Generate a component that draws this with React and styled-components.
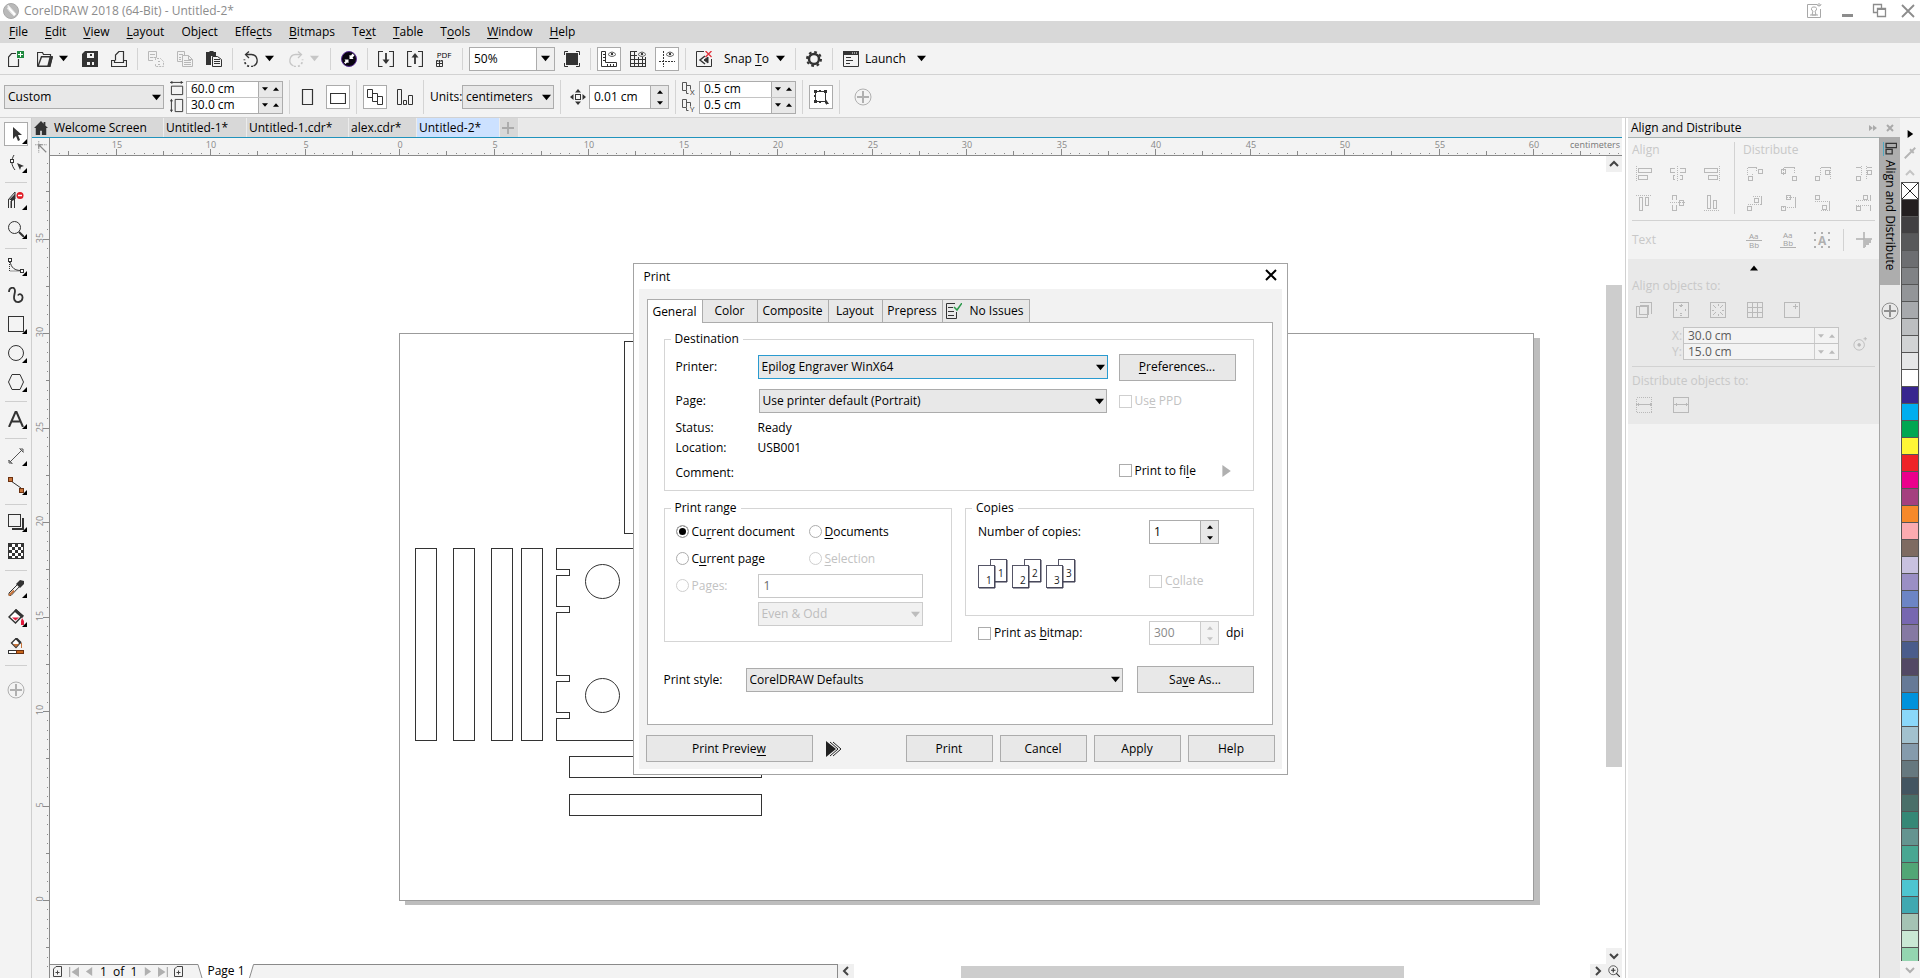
import React from 'react';
import styled, { createGlobalStyle, css } from 'styled-components';

const GlobalStyle = createGlobalStyle`
  * {
    box-sizing: border-box;
  }

  html, body, #root {
    height: 100%;
  }

  body {
    margin: 0;
    overflow: hidden;
    background: #f3f3f3;
    color: #000;
    font-family: 'Open Sans', 'Noto Sans', sans-serif;
    font-size: 12px;
    line-height: 16px;
  }

  button, input, select {
    font: inherit;
    color: inherit;
    margin: 0;
  }

  button {
    cursor: default;
    padding: 0;
    border: 0;
    background: none;
  }

  u {
    text-underline-offset: 2px;
  }

  svg {
    display: block;
    flex: none;
  }
`;

/* ---------- shared parts ---------- */

const Glyph = ({ size = 16, children, ...rest }) => (
  <svg
    width={size}
    height={size}
    viewBox="0 0 16 16"
    fill="none"
    stroke="#333"
    strokeWidth="1"
    aria-hidden="true"
    {...rest}
  >
    {children}
  </svg>
);

const Caret = ({ dir = 'down', color = '#000', size = 9 }) => {
  const shapes = {
    down: 'M0 2h10l-5 6z',
    up: 'M0 8h10l-5 -6z',
    left: 'M8 0v10l-7 -5z',
    right: 'M2 0v10l7 -5z',
  };
  return (
    <svg width={size} height={size} viewBox="0 0 10 10" aria-hidden="true">
      <path d={shapes[dir]} fill={color} />
    </svg>
  );
};

const Chevron = ({ dir = 'up', color = '#444' }) => {
  const shapes = {
    up: 'M1 7l4 -4l4 4',
    down: 'M1 3l4 4l4 -4',
    left: 'M7 1l-4 4l4 4',
    right: 'M3 1l4 4l-4 4',
  };
  return (
    <svg width="10" height="10" viewBox="0 0 10 10" aria-hidden="true">
      <path d={shapes[dir]} fill="none" stroke={color} strokeWidth="2" />
    </svg>
  );
};

const PlusCircle = ({ color = '#b0b0b0', size = 18 }) => (
  <svg width={size} height={size} viewBox="0 0 18 18" fill="none" stroke={color} aria-hidden="true">
    <circle cx="9" cy="9" r="8" />
    <path d="M3 9h12M9 3v12" strokeWidth="2" />
  </svg>
);

const SelectWrap = styled.span`
  display: grid;
  align-items: center;
  height: 24px;
  width: ${(p) => (p.$width ? `${p.$width}px` : 'auto')};
  margin: 0 ${(p) => (p.$inset ? 1 : 0)}px;

  & > * {
    grid-area: 1 / 1;
  }

  & > svg {
    justify-self: end;
    margin-right: 3px;
    pointer-events: none;
  }
`;

const SelectBox = styled.select`
  appearance: none;
  width: 100%;
  height: 24px;
  padding: 0 16px 0 3px;
  border: 1px solid ${(p) => (p.$focus ? '#2a9bd0' : '#acacac')};
  border-radius: 0;
  background: #e8e8e8;
  outline: none;

  &:disabled {
    opacity: 1;
    color: #bdbdbd;
    border-color: #cccccc;
    background: #f1f1f1;
  }
`;

const Select = ({ id, value, width, inset, focus, disabled, label }) => (
  <SelectWrap $width={width} $inset={inset}>
    <SelectBox id={id} $focus={focus} disabled={disabled} aria-label={label} defaultValue={value}>
      <option>{value}</option>
    </SelectBox>
    <Caret color={disabled ? '#bdbdbd' : '#000'} />
  </SelectWrap>
);

const TextBox = styled.input`
  min-width: 0;
  flex: 1;
  height: 24px;
  padding: 0 5px;
  border: 1px solid #acacac;
  border-radius: 0;
  background: #fff;
  outline: none;

  &:disabled {
    color: #6a6a6a;
    border-color: #c8c8c8;
  }
`;

const SpinWrap = styled.span`
  display: flex;
  width: ${(p) => p.$width}px;
  height: 24px;
  border: 1px solid ${(p) => (p.$off ? '#cccccc' : '#acacac')};
  background: #fff;
`;

const SpinInput = styled.input`
  flex: 1;
  min-width: 0;
  width: 0;
  padding: 0 4px;
  border: 0;
  background: transparent;
  outline: none;

  &:disabled {
    color: #8a8a8a;
  }
`;

const SpinButtons = styled.span`
  display: flex;
  flex-direction: ${(p) => (p.$row ? 'row' : 'column')};
  width: ${(p) => (p.$row ? 24 : 18)}px;
  border-left: 1px solid ${(p) => (p.$off ? '#cccccc' : '#acacac')};
  background: ${(p) => (p.$off ? '#f3f3f3' : '#e8e8e8')};

  button {
    flex: 1;
    display: flex;
    align-items: center;
    justify-content: center;
  }
`;

const Spinner = ({ id, value, width, disabled, label }) => (
  <SpinWrap $width={width} $off={disabled}>
    <SpinInput id={id} defaultValue={value} disabled={disabled} aria-label={label} />
    <SpinButtons $off={disabled}>
      <button aria-label="Increase" disabled={disabled}>
        <Caret dir="up" size={6} color={disabled ? '#c4c4c4' : '#000'} />
      </button>
      <button aria-label="Decrease" disabled={disabled}>
        <Caret size={6} color={disabled ? '#c4c4c4' : '#000'} />
      </button>
    </SpinButtons>
  </SpinWrap>
);

const PairBox = styled.div`
  width: ${(p) => p.$width}px;
  border: 1px solid ${(p) => (p.$off ? '#c4c4c4' : '#acacac')};
  background: ${(p) => (p.$off ? '#f3f3f3' : '#fff')};
  color: ${(p) => (p.$off ? '#5c5c5c' : '#000')};
`;

const PairRow = styled.div`
  display: flex;
  height: 15px;

  & + & {
    height: 16px;
    border-top: 1px solid ${(p) => (p.$off ? '#c4c4c4' : '#acacac')};
  }
`;

const PairField = ({ width, values, labels, off }) => (
  <PairBox $width={width} $off={off}>
    {values.map((v, i) => (
      <PairRow key={labels[i]} $off={off}>
        <SpinInput defaultValue={v} aria-label={labels[i]} />
        <SpinButtons $row $off={off}>
          <button aria-label="Decrease">
            <Caret size={6} color={off ? '#bbb' : '#000'} />
          </button>
          <button aria-label="Increase">
            <Caret dir="up" size={6} color={off ? '#bbb' : '#000'} />
          </button>
        </SpinButtons>
      </PairRow>
    ))}
  </PairBox>
);

/* ---------- window chrome ---------- */

const Window = styled.div`
  display: flex;
  flex-direction: column;
  height: 100vh;
`;

const TitleBar = styled.header`
  display: flex;
  align-items: center;
  height: 21px;
  padding: 0 4px 0 3px;
  background: #fff;
  color: #8c8c8c;
`;

const TitleText = styled.span`
  flex: 1;
  margin-left: 5px;
`;

const WindowButtons = styled.div`
  display: flex;
  align-items: center;
  gap: 17px;

  button:last-child {
    margin-left: -5px;
  }
`;

const MenuBar = styled.nav`
  display: flex;
  align-items: center;
  height: 22px;
  padding-left: 9px;
  gap: 17px;
  background: #d8d8d8;
`;

const ToolBar = styled.div`
  display: flex;
  align-items: center;
  height: 32px;
  padding-left: 1px;
  border-bottom: 1px solid #d2d2d2;
  background: #f3f3f3;
`;

const ToolCell = styled.button`
  display: flex;
  align-items: center;
  justify-content: center;
  width: 29px;
  height: 24px;
  padding-left: 1px;
`;

const Pressed = styled.span`
  display: flex;
  align-items: center;
  justify-content: center;
  width: 24px;
  height: 24px;
  border: 1px solid #ababab;
  background: #fff;
`;

const CaretButton = styled.button`
  width: 12px;
  height: 24px;
  margin-right: 4px;
`;

const Separator = styled.span`
  width: 8px;
  height: 22px;
  background: linear-gradient(#d4d4d4, #d4d4d4) center / 1px 100% no-repeat;
`;

const ZoomBox = styled.div`
  display: flex;
  width: 86px;
  height: 24px;
  margin: 0 2px 0 3px;
  border: 1px solid #acacac;
  background: #fff;

  button {
    display: grid;
    place-items: center;
    width: 18px;
    border-left: 1px solid #acacac;
    background: #f0f0f0;
  }
`;

const PdfIcon = styled.span`
  display: flex;
  flex-direction: column;
  width: 17px;
  font-size: 8px;
  line-height: 9px;
`;

const TextTool = styled.button`
  display: flex;
  align-items: center;
  height: 24px;
  gap: ${(p) => p.$gap}px;
  padding-left: ${(p) => p.$pad || 0}px;
  width: 73px;
`;

const PropertyBar = styled.div`
  display: flex;
  align-items: center;
  gap: 6px;
  height: 43px;
  padding: 2px 0 0 4px;
  border-bottom: 1px solid #d2d2d2;
  background: #f3f3f3;
`;

const PropGroup = styled.div`
  display: flex;
  align-items: center;
`;

const IconStack = styled.span`
  display: flex;
  flex-direction: column;
  gap: 2px;
  width: ${(p) => p.$width}px;
`;

const PropCell = styled.button`
  display: flex;
  align-items: center;
  justify-content: center;
  width: 24px;
  height: 24px;
  border: ${(p) => (p.$on ? '1px solid #ababab' : '0')};
  background: ${(p) => (p.$on ? '#fff' : 'none')};
`;

const PropSep = styled.span`
  width: 1px;
  height: 34px;
  background: #d4d4d4;
`;

const UnitsLabel = styled.label`
  width: 32px;
  white-space: nowrap;
`;

const NudgeIcon = styled.span`
  display: grid;
  place-items: center;
  width: 22px;
`;

const AddCell = styled.button`
  margin-left: 8px;
`;

/* ---------- work area ---------- */

const Work = styled.div`
  display: flex;
  flex: 1;
  min-height: 0;
`;

const Toolbox = styled.aside`
  display: flex;
  flex-direction: column;
  width: 32px;
  padding-top: 2px;
  border-right: 1px solid #cfcfcf;
  background: #f3f3f3;
`;

const ToolboxButton = styled.button`
  display: grid;
  place-items: center;
  width: 32px;
  height: 29px;
  padding-bottom: 1px;

  & > * {
    grid-area: 1 / 1;
  }
`;

const Flyout = styled.svg`
  place-self: end;
  margin: 0 5px 4px 0;
`;

const ToolboxRule = styled.span`
  width: 22px;
  height: 8px;
  margin-left: 5px;
  background: linear-gradient(#cfcfcf, #cfcfcf) center / 100% 1px no-repeat;
`;

const ToolboxAdd = styled.button`
  align-self: center;
  margin-top: 12px;
`;

const Documents = styled.section`
  display: flex;
  flex: 1;
  flex-direction: column;
  min-width: 0;
`;

const DocTabs = styled.div`
  display: flex;
  height: 20px;
  border-bottom: 1px solid #2093bd;
  background: #e9e9e9;
`;

const DocTab = styled.button`
  display: flex;
  align-items: center;
  gap: 6px;
  width: ${(p) => p.$width}px;
  padding-left: 2px;
  border-right: 1px solid #ececec;
  background: ${(p) => (p.$active ? '#cce1ff' : '#d8d8d8')};
  white-space: nowrap;
`;

const RulerRow = styled.div`
  display: flex;
  height: 18px;
  background: #f3f3f3;
`;

const RulerCorner = styled.div`
  display: grid;
  place-items: center;
  width: 17px;
`;

const HRuler = styled.svg`
  flex: 1;
  min-width: 0;
  border-bottom: 1px solid #8a8a8a;
  border-left: 1px solid #8a8a8a;
  font-size: 9px;
`;

const VRuler = styled.svg`
  width: 18px;
  border-right: 1px solid #8a8a8a;
  background: #f3f3f3;
  font-size: 9px;
`;

const DocBody = styled.div`
  display: flex;
  flex: 1;
  min-height: 0;
`;

const Center = styled.div`
  display: flex;
  flex: 1;
  flex-direction: column;
  min-width: 0;
  background: #fff;
`;

const CanvasRow = styled.div`
  display: flex;
  flex: 1;
  min-height: 0;
`;

const Canvas = styled.svg`
  flex: 1;
  min-width: 0;
  height: 100%;
`;

const VScroll = styled.div`
  display: flex;
  flex-direction: column;
  width: 16px;
`;

const ScrollButton = styled.button`
  display: grid;
  place-items: center;
  width: 16px;
  height: 16px;
  background: #f0f0f0;
`;

const VTrack = styled.div`
  flex: 1;
  display: grid;
  grid-template-rows: 113fr 482fr 181fr;

  &::before {
    content: '';
  }

  &::after {
    content: '';
    grid-row: 2;
    background: #cdcdcd;
  }
`;

const PageBar = styled.footer`
  display: flex;
  height: 14px;
  line-height: 14px;
`;

const BarScrollButton = styled(ScrollButton)`
  height: 14px;
`;

const PageNav = styled.div`
  display: flex;
  align-items: center;
  gap: 6px;
  width: 147px;
  padding-left: 3px;
  border-top: 1px solid #8a8a8a;
  background: #f3f3f3;
  white-space: nowrap;
`;

const PageTab = styled.button`
  display: flex;
  align-items: start;
  height: 14px;
  background: #fff;
`;

const PageTabText = styled.span`
  width: 46px;
  text-align: center;
`;

const PageFill = styled.div`
  width: 583px;
  border-top: 1px solid #8a8a8a;
  border-right: 1px solid #8a8a8a;
  background: #f3f3f3;
`;

const HTrack = styled.div`
  flex: 1;
  display: grid;
  grid-template-columns: 107fr 442fr 186fr;

  &::before {
    content: '';
  }

  &::after {
    content: '';
    grid-column: 2;
    margin-top: 2px;
    background: #cdcdcd;
  }
`;

const Splitter = styled.div`
  width: 6px;
  border-left: 3px solid #fff;
  border-right: 2px solid #fff;
  background: #d0d0d0;
`;

/* ---------- align docker ---------- */

const DockerArea = styled.div`
  display: flex;
  flex-direction: column;
  width: 272px;
  background: #e9e9e9;
`;

const DockerTitle = styled.div`
  display: flex;
  align-items: center;
  gap: 8px;
  height: 19px;
  padding: 0 6px 0 3px;

  span {
    flex: 1;
  }
`;

const DockerMain = styled.div`
  display: flex;
  flex: 1;
`;

const Docker = styled.aside`
  flex: 1;
  border-top: 1px solid #a6b2b2;
  background: #f3f3f3;
  color: #c8c8c8;
`;

const AlignSection = styled.div`
  display: grid;
  grid-template-columns: 102px 1fr;
  height: 83px;
  margin: 0 4px;
  padding-top: 4px;
  border-bottom: 1px solid #d2d2d2;
`;

const AlignColumn = styled.div`
  padding-left: ${(p) => (p.$ruled ? 8 : 0)}px;
  height: 72px;
  border-left: ${(p) => (p.$ruled ? '1px solid #d2d2d2' : '0')};
`;

const IconGrid = styled.div`
  display: grid;
  grid-template-columns: ${(p) => p.$cols};
  row-gap: 13px;
  padding-top: 8px;
  padding-left: 4px;
`;

const DockerText = styled.div`
  display: grid;
  grid-template-columns: 114px 34px 34px 34px 1fr;
  align-items: center;
  height: 38px;
  padding-left: 4px;
`;

const EdgeCell = styled.span`
  height: 22px;
  margin-left: -5px;
  padding: 3px 0 0 12px;
  border-left: 1px solid #d2d2d2;
`;

const AlignTo = styled.div`
  height: 165px;
  padding: 4px 4px 0;
  background: #e9e9e9;
`;

const Collapse = styled.div`
  display: flex;
  justify-content: center;
  padding-top: 1px;
`;

const AlignHeading = styled.div`
  margin-top: ${(p) => p.$top}px;
`;

const IconLine = styled.div`
  display: flex;
  gap: 21px;
  padding: 8px 0 0 4px;
`;

const PointRow = styled.div`
  display: flex;
  align-items: center;
  margin-top: 9px;
  padding: 0 0 6px 40px;
  border-bottom: 1px solid #d2d2d2;
`;

const AxisLabels = styled.div`
  width: 11px;
`;

const PointIcon = styled.span`
  margin-left: 14px;
`;

const DockerStrip = styled.div`
  display: flex;
  flex-direction: column;
  align-items: center;
  width: 21px;
  border-left: 1px solid #a6a6a6;
`;

const DockerTab = styled.button`
  display: flex;
  align-items: center;
  gap: 4px;
  width: 20px;
  height: 148px;
  margin-bottom: 17px;
  padding-top: 5px;
  background: #adadad;
  writing-mode: vertical-rl;
  white-space: nowrap;
`;

const Palette = styled.aside`
  display: flex;
  flex-direction: column;
  align-items: center;
  width: 20px;
  padding-top: 4px;
  background: #f3f3f3;
`;

const PaletteTop = styled.div`
  display: flex;
  flex-direction: column;
  align-items: center;
  justify-content: space-between;
  height: 60px;
  padding: 8px 0 4px;
`;

const SwatchList = styled.div`
  display: flex;
  flex-direction: column;
  flex: 1;
  min-height: 0;
  overflow: hidden;
  width: 18px;
  border: 1px solid #555;
  border-bottom: 0;
`;

const Swatch = styled.button`
  flex: none;
  height: 17px;
  border-bottom: 1px solid #555;
  background: ${(p) => p.$color};
`;

const PaletteEnd = styled.button`
  display: grid;
  place-items: center;
  width: 18px;
  height: 17px;
`;

/* ---------- print dialog ---------- */

const Overlay = styled.div`
  position: fixed;
  inset: 0;
  display: flex;
  justify-content: center;
  align-items: flex-start;
  padding-top: 263px;
`;

const Dialog = styled.section`
  width: 655px;
  padding: 0 5px 5px;
  border: 1px solid #a3a3a3;
  background: #fff;
`;

const DialogTitle = styled.div`
  display: flex;
  align-items: center;
  justify-content: space-between;
  height: 25px;
  padding: 0 5px;
`;

const CloseButton = styled.button`
  height: 17px;
  align-self: flex-start;
  padding-top: 5px;
`;

const DialogBody = styled.div`
  padding: 10px 7px 7px;
  background: #f2f2f2;
`;

const TabList = styled.div`
  display: flex;
  padding-left: 1px;
`;

const Tab = styled.button`
  display: flex;
  align-items: center;
  justify-content: ${(p) => (p.$icon ? 'flex-start' : 'center')};
  gap: 8px;
  width: ${(p) => p.$width}px;
  height: 23px;
  padding-left: ${(p) => (p.$icon ? 3 : 0)}px;
  border: 1px solid #acacac;
  border-left-width: ${(p) => (p.$active ? 1 : 0)}px;
  border-bottom: 0;
  background: #e8e8e8;
  white-space: nowrap;

  ${(p) =>
    p.$active &&
    css`
      z-index: 1;
      height: 24px;
      margin-bottom: -1px;
      background: #fff;
    `}
`;

const Panel = styled.div`
  margin: 0 2px 0 1px;
  padding: 8px 18px 31px 16px;
  border: 1px solid #acacac;
  background: #fff;
`;

const Group = styled.fieldset`
  min-width: 0;
  margin: 0;
  padding: ${(p) => p.$pad};
  border: 1px solid #d5d5d5;

  legend {
    margin-left: ${(p) => p.$indent}px;
    padding: 0 4px;
  }
`;

const DestinationGrid = styled.div`
  display: grid;
  grid-template-columns: 82px 350px 117px;
  grid-template-rows: 28px 40px 14px 26px 23px;
  align-items: center;

  & > :nth-child(3n) {
    margin-left: 11px;
    width: 117px;
  }
`;

const PushButton = styled.button`
  width: ${(p) => (p.$width ? `${p.$width}px` : 'auto')};
  height: 27px;
  border: 1px solid #acacac;
  background: #e8e8e8;
`;

const Choice = styled.label`
  display: flex;
  align-items: center;
  gap: 3px;
  white-space: nowrap;
  color: ${(p) => (p.$off ? '#c2c2c2' : '#000')};
`;

const Check = styled.input`
  appearance: none;
  flex: none;
  width: 13px;
  height: 13px;
  border: 1px solid ${(p) => (p.disabled ? '#cfcfcf' : '#acacac')};
  background: #fff;
`;

const Radio = styled.input`
  appearance: none;
  flex: none;
  width: 13px;
  height: 13px;
  border: 1px solid ${(p) => (p.disabled ? '#cfcfcf' : '#acacac')};
  border-radius: 50%;
  background: #fff;

  &:checked {
    background: #000;
    box-shadow: inset 0 0 0 2px #fff;
  }
`;

const FileChoice = styled.div`
  display: flex;
  align-items: center;
  justify-content: space-between;
  padding: 0 4px 4px 0;
`;

const Halves = styled.div`
  display: grid;
  grid-template-columns: 1fr 1fr;
  align-items: start;
  gap: 13px;
  margin-top: 9px;
`;

const RangeRow = styled.div`
  display: grid;
  grid-template-columns: ${(p) => p.$cols};
  align-items: center;
  height: ${(p) => p.$height || 27}px;
`;

const CollateCell = styled.div`
  padding-top: 14px;
`;

const BitmapRow = styled.div`
  display: grid;
  grid-template-columns: 171px 70px 1fr;
  align-items: center;
  height: 24px;
  margin-top: 5px;
  padding-left: 13px;

  & > :last-child {
    padding-left: 7px;
  }
`;

const StyleRow = styled.div`
  display: grid;
  grid-template-columns: 82px 1fr 117px;
  align-items: center;
  margin-top: 21px;

  span {
    margin-right: 14px;
  }
`;

const DialogFooter = styled.div`
  display: flex;
  align-items: center;
  margin-top: 10px;
`;

const FooterActions = styled.div`
  display: flex;
  gap: 7px;
  margin-left: auto;
`;

const PreviewArrow = styled.button`
  margin-left: 13px;
`;

/* ---------- data ---------- */

const menus = [
  ['', 'F', 'ile'],
  ['', 'E', 'dit'],
  ['', 'V', 'iew'],
  ['', 'L', 'ayout'],
  ['Ob', 'j', 'ect'],
  ['Effe', 'c', 'ts'],
  ['', 'B', 'itmaps'],
  ['Te', 'x', 't'],
  ['', 'T', 'able'],
  ['T', 'o', 'ols'],
  ['', 'W', 'indow'],
  ['', 'H', 'elp'],
];

const swatches = [
  '#231f20', '#414042', '#58595b', '#6d6e71', '#808285', '#939598', '#a7a9ac', '#bcbec0',
  '#d1d3d4', '#e6e7e8', '#ffffff', '#38268f', '#00aeef', '#00a651', '#fff735', '#ee2328',
  '#ec008c', '#a5407f', '#f7892a', '#fbabb0', '#7e6b62', '#c8c1df', '#9a8fc5', '#6d85c5',
  '#7767b0', '#8579a3', '#4a5c8b', '#524864', '#667a97', '#0092dc', '#8ad7f9', '#a2c1ce',
  '#859bac', '#66787f', '#435561', '#4a6f69', '#358876', '#649490', '#48a792', '#51a676',
  '#4ec5d0', '#40a8b1', '#a5c3b4', '#c9e8d4', '#94d5b0',
];

const CM = 18.9;

/* ---------- pieces ---------- */

const TopRuler = () => {
  const ticks = [];
  for (let i = -36; i <= 129; i += 1) {
    const x = Math.round(349 + (i * CM) / 2) + 0.5;
    let y = 15;
    if (i % 10 === 0) y = 11;
    else if (i % 5 === 0) y = 13;
    ticks.push(<path key={i} d={`M${x} ${y}V${y === 15 ? 16 : 17}`} stroke="#8a8a8a" />);
  }
  const labels = [];
  for (let n = -15; n <= 60; n += 5) {
    labels.push(
      <text key={n} x={Math.round(350 + n * CM)} y="10" textAnchor="middle" fill="#888">
        {Math.abs(n)}
      </text>
    );
  }
  return (
    <HRuler height="18">
      {ticks}
      {labels}
      <text x="100%" dx="-2" y="10" textAnchor="end" fill="#777">
        centimeters
      </text>
    </HRuler>
  );
};

const SideRuler = () => {
  const ticks = [];
  for (let i = -7; i <= 78; i += 1) {
    const y = Math.round(744 - (i * CM) / 2) + 0.5;
    let x = 15;
    if (i % 10 === 0) x = 11;
    else if (i % 5 === 0) x = 14;
    ticks.push(<path key={i} d={`M${x} ${y}H${x === 15 ? 16 : 17}`} stroke="#8a8a8a" />);
  }
  return (
    <VRuler>
      {ticks}
      {[0, 5, 10, 15, 20, 25, 30, 35].map((n) => {
        const y = Math.round(743 - n * CM);
        return (
          <text key={n} x="11" y={y} transform={`rotate(-90 11 ${y})`} textAnchor="middle" fill="#888">
            {n}
          </text>
        );
      })}
    </VRuler>
  );
};

const Drawing = () => (
  <Canvas fill="none" stroke="#333" shapeRendering="crispEdges">
    <path d="M1484 182h6v567h-1135v-5h1129z" fill="#bdbdbd" stroke="none" />
    <rect x="349.5" y="177.5" width="1134" height="567" fill="#fff" stroke="#9b9b9b" />
    <rect x="574.5" y="185.5" width="193" height="192" />
    <rect x="365.5" y="392.5" width="21" height="192" />
    <rect x="403.5" y="392.5" width="21" height="192" />
    <rect x="441.5" y="392.5" width="21" height="192" />
    <rect x="471.5" y="392.5" width="21" height="192" />
    <path d="M700.5 392.5H506.5v21h13v6h-13v31h13v6h-13v63h13v6h-13v31h13v6h-13v22h194" />
    <circle cx="552.5" cy="425.5" r="17" shapeRendering="auto" />
    <circle cx="552.5" cy="539.5" r="17" shapeRendering="auto" />
    <rect x="519.5" y="600.5" width="192" height="21" />
    <rect x="519.5" y="638.5" width="192" height="21" />
  </Canvas>
);

const Tool = ({ label, flyout = true, on, children }) => (
  <ToolboxButton aria-label={label}>
    {on ? <Pressed>{children}</Pressed> : children}
    {flyout && (
      <Flyout width="5" height="5" viewBox="0 0 5 5">
        <path d="M5 0v5H0z" fill="#000" />
      </Flyout>
    )}
  </ToolboxButton>
);

const StandardBar = () => (
  <ToolBar>
    <ToolCell aria-label="New">
      <Glyph>
        <path d="M8 2.500H3.500L0.500 6v9.500h10V8" strokeWidth="1.200" />
        <rect x="9" y="0" width="7" height="7" fill="#1f8a3f" stroke="none" />
        <path d="M12.500 1v5M10 3.500h5" stroke="#fff" />
      </Glyph>
    </ToolCell>
    <ToolCell aria-label="Open">
      <Glyph>
        <path d="M0.500 15V1.500h5l1 2h7v2" strokeWidth="1.200" />
        <path d="M0 16L4 5h12l-2.500 11z" fill="#333" stroke="none" />
        <path d="M5 6.500h9.500l-2 8H2z" fill="#f3f3f3" stroke="none" />
        <path d="M12.500 6h3.500l-3 10h-3z" fill="#333" stroke="none" />
      </Glyph>
    </ToolCell>
    <CaretButton aria-label="Open recent">
      <Caret />
    </CaretButton>
    <ToolCell aria-label="Save">
      <Glyph>
        <path d="M0 3l3 -3h13v16H0z" fill="#333" stroke="none" />
        <path d="M5 2h7v5H5zM5 11h7v3H5z" fill="#f3f3f3" stroke="none" />
        <path d="M8 3h2v2H8zM8 11h2v3H8z" fill="#333" stroke="none" />
      </Glyph>
    </ToolCell>
    <ToolCell aria-label="Print">
      <Glyph strokeWidth="1.200">
        <path d="M4.500 9.500V4l3.500 -3.500h4.500v9M0.500 9.500h3v2h9v-2h3v6h-15z" />
      </Glyph>
    </ToolCell>
    <Separator />
    <ToolCell aria-label="Cut">
      <Glyph stroke="#b8b8b8">
        <path d="M5 9.500H0.500v-9h8v6M2 3.500h5M2 6.500h3M5.500 6.500h3" />
        <path d="M7.500 9v-1.500h5l3 3v5h-8V13M10 10.500h3M10 13.500h3" strokeDasharray="2 1" />
      </Glyph>
    </ToolCell>
    <ToolCell aria-label="Copy">
      <Glyph stroke="#b8b8b8">
        <path d="M5 10.500H0.500v-10h7v4M2 3.500h4M2 6.500h2M2 8.500h2" />
        <path d="M5.500 4.500h6l4 4v7h-10zM7 9.500h7M7 11.500h7M7 13.500h7M11.500 4.500v4h4" />
      </Glyph>
    </ToolCell>
    <ToolCell aria-label="Paste">
      <Glyph>
        <path d="M0 1h3l1 -1h3l1 1h2v4H5v9H0z" fill="#333" stroke="none" />
        <path d="M6.500 5.500h5l4 3v7h-9zM8 8.500h6M8 10.500h6M8 12.500h6" />
      </Glyph>
    </ToolCell>
    <Separator />
    <ToolCell aria-label="Undo">
      <Glyph strokeWidth="1.300">
        <path d="M3 3.500h5.500a6 6 0 0 1 2 11.500" />
        <path d="M6 0.500L2.500 3.500L6 7" />
        <path d="M10 15.300a6.500 6.500 0 0 1 -8.500 -7" strokeDasharray="2 2" strokeWidth="1.800" />
      </Glyph>
    </ToolCell>
    <CaretButton aria-label="Undo history">
      <Caret />
    </CaretButton>
    <ToolCell aria-label="Redo">
      <Glyph stroke="#c6c6c6" strokeWidth="1.300">
        <path d="M13 3.500H7.500a6 6 0 0 0 -2 11.500" />
        <path d="M10 0.500l3.500 3l-3.500 3.500" />
        <path d="M6 15.300a6.500 6.500 0 0 0 8.500 -7" strokeDasharray="2 2" strokeWidth="1.800" />
      </Glyph>
    </ToolCell>
    <CaretButton aria-label="Redo history">
      <Caret color="#c6c6c6" />
    </CaretButton>
    <Separator />
    <ToolCell aria-label="Search content">
      <Glyph>
        <circle cx="8" cy="8" r="7.500" fill="#08040f" stroke="#5b2f96" />
        <path d="M8.500 4v4h4l-1 -1.500l2 -2l-2 -2l-1.500 2zM7.500 12V8.500h-4l1 1.500l-1.500 1.500l1.500 1.500l1.500 -1.500z" fill="#fff" stroke="none" />
      </Glyph>
    </ToolCell>
    <Separator />
    <ToolCell aria-label="Import">
      <Glyph>
        <path d="M5 0.500H0.500v15h4M11 0.500h4.500v15h-4" strokeWidth="1.200" />
        <path d="M8 2v10" strokeWidth="1.800" />
        <path d="M4.500 8.500h7L8 13z" fill="#333" stroke="none" />
      </Glyph>
    </ToolCell>
    <ToolCell aria-label="Export">
      <Glyph>
        <path d="M5 0.500H0.500v15h4M11 0.500h4.500v15h-4" strokeWidth="1.200" />
        <path d="M8 4v9" strokeWidth="1.800" />
        <path d="M4.500 6.500h7L8 2z" fill="#333" stroke="none" />
      </Glyph>
    </ToolCell>
    <ToolCell aria-label="Publish to PDF">
      <PdfIcon>
        PDF
        <svg width="8" height="8" viewBox="0 0 8 8" fill="none" stroke="#333">
          <path d="M2 1.500H0.500v6h6v-6H5M3.500 7V1M1.500 3l2 -2l2 2M1 4.500h5" />
        </svg>
      </PdfIcon>
    </ToolCell>
    <Separator />
    <ZoomBox>
      <SpinInput defaultValue="50%" aria-label="Zoom level" />
      <button aria-label="Zoom levels">
        <Caret />
      </button>
    </ZoomBox>
    <ToolCell aria-label="Full-screen preview">
      <Glyph>
        <rect x="2.500" y="2.500" width="11" height="11" fill="#333" />
        <path d="M4 0.500H0.500V4M12 0.500h3.500V4M4 15.500H0.500V12M12 15.500h3.500V12" />
      </Glyph>
    </ToolCell>
    <Separator />
    <ToolCell aria-label="Show rulers">
      <Pressed>
        <Glyph>
          <path d="M0.500 0.500h4v11h11v4h-15zM2 3.500h2M2 6.500h2M2 9.500h2M6.500 13v2M9.500 13v2M12.500 13v2" />
          <path d="M7 3.500q4 -5 8 0q-4 4 -8 0z" stroke="#666" />
          <circle cx="11" cy="3" r="1.200" fill="#333" stroke="none" />
        </Glyph>
      </Pressed>
    </ToolCell>
    <ToolCell aria-label="Show grid">
      <Glyph>
        <path d="M0.500 0v16M4.500 0v16M8.500 6v10M12.500 6v10M15.500 6v10M0 0.500h7M0 4.500h7M0 8.500h16M0 12.500h16M0 15.500h16" />
        <path d="M8 3.500q4 -5 8 0q-4 4 -8 0z" stroke="#666" />
        <circle cx="12" cy="3" r="1.200" fill="#333" stroke="none" />
      </Glyph>
    </ToolCell>
    <ToolCell aria-label="Show guidelines">
      <Pressed>
        <Glyph>
          <path d="M4.500 0v16M0 10.500h16" strokeDasharray="2 1" />
          <path d="M7 3.500q4 -5 8 0q-4 4 -8 0z" stroke="#666" />
          <circle cx="11" cy="3" r="1.200" fill="#333" stroke="none" />
        </Glyph>
      </Pressed>
    </ToolCell>
    <Separator />
    <ToolCell aria-label="Snap off">
      <Glyph>
        <path d="M8 0.500H0.500v15h15V8" />
        <path d="M9 5L4 9l5 4" strokeWidth="1.500" />
        <path d="M8 9l4 -3v6z" fill="#333" />
        <path d="M9.500 0l6 6M15.500 0l-6 6" stroke="#e0303a" strokeWidth="1.300" />
      </Glyph>
    </ToolCell>
    <TextTool $pad={6} $gap={7}>
      <span>
        Snap <u>T</u>o
      </span>
      <Caret />
    </TextTool>
    <Separator />
    <ToolCell aria-label="Options">
      <Glyph>
        <circle cx="8" cy="8" r="5" strokeWidth="2.500" />
        <circle cx="8" cy="8" r="7" strokeWidth="2" strokeDasharray="2.750 2.750" />
      </Glyph>
    </ToolCell>
    <Separator />
    <ToolCell aria-label="Application launcher">
      <Glyph>
        <path d="M0.500 0.500h15v15h-15zM3 6.500h5M3 9.500h7M3 12.500h4" />
        <path d="M0 0h16v4H0z" fill="#333" stroke="none" />
        <path d="M9 2h1M11 2h1M13 2h1" stroke="#fff" />
      </Glyph>
    </ToolCell>
    <TextTool $gap={11}>
      Launch
      <Caret />
    </TextTool>
  </ToolBar>
);

const DuplicateIcon = ({ axis }) => (
  <svg width="14" height="15" viewBox="0 0 14 15" fill="none" stroke="#555" aria-hidden="true">
    <path d="M0.500 1.500h4v8h-4zM5 4.500h3.500v4M4.500 10v2.500h2" />
    <text x="8" y="14" fontSize="8" fill="#333" stroke="none">{axis}</text>
  </svg>
);

const PropertiesBar = () => (
  <PropertyBar>
    <Select value="Custom" width={160} label="Page size" />
    <PropGroup>
      <IconStack $width={16}>
        <Glyph size={15}>
          <path d="M0 1.500h14M2 0v3M12 0v3M1.500 5.500h12v9h-12z" />
        </Glyph>
        <Glyph size={15}>
          <path d="M1.500 1v14M0 3h3M0 13h3M5.500 1.500h8v13h-8z" />
        </Glyph>
      </IconStack>
      <PairField width={97} values={['60.0 cm', '30.0 cm']} labels={['Page width', 'Page height']} />
    </PropGroup>
    <PropSep />
    <PropCell aria-label="Portrait">
      <Glyph>
        <path d="M2.500 0.500h10v15h-10z" strokeWidth="1.200" />
      </Glyph>
    </PropCell>
    <PropCell $on aria-label="Landscape">
      <Glyph>
        <path d="M0.500 4.500h15v10h-15z" strokeWidth="1.200" />
      </Glyph>
    </PropCell>
    <PropSep />
    <PropCell $on aria-label="All pages">
      <Glyph>
        <path d="M0.500 0.500h5v8h-5zM5.500 4.500h5v8h-5zM10.500 7.500h5v8h-5z" fill="#fff" />
      </Glyph>
    </PropCell>
    <PropCell aria-label="Current page">
      <Glyph>
        <path d="M0.500 0.500h4v15h-4zM6.500 11.500h3v4h-3zM11.500 6.500h4v9h-4z" />
      </Glyph>
    </PropCell>
    <PropSep />
    <PropGroup>
      <UnitsLabel htmlFor="units">Units:</UnitsLabel>
      <Select id="units" value="centimeters" width={92} />
    </PropGroup>
    <PropSep />
    <PropGroup>
      <NudgeIcon>
        <Glyph>
          <rect x="5.500" y="5.500" width="5" height="5" />
          <path d="M8 0l3 3.500H5zM8 16l3 -3.500H5zM0 8l3.500 -3v6zM16 8l-3.500 -3v6z" fill="#333" stroke="none" />
        </Glyph>
      </NudgeIcon>
      <Spinner value="0.01 cm" width={80} label="Nudge distance" />
    </PropGroup>
    <PropSep />
    <PropGroup>
      <IconStack $width={17}>
        <DuplicateIcon axis="X" />
        <DuplicateIcon axis="Y" />
      </IconStack>
      <PairField width={97} values={['0.5 cm', '0.5 cm']} labels={['Duplicate X', 'Duplicate Y']} />
    </PropGroup>
    <PropSep />
    <PropCell $on aria-label="Treat as filled">
      <Glyph>
        <path d="M2.500 2.500h10v10h-10z" />
        <path d="M1 1h3v3H1zM6 1h2v2H6zM11 1h3v3h-3zM1 11h3v3H1zM1 6h2v2H1zM6 12h2v2H6zM12 9l4 6h-2v1l-2 -2z" fill="#333" stroke="none" />
      </Glyph>
    </PropCell>
    <PropSep />
    <AddCell aria-label="Customize">
      <PlusCircle />
    </AddCell>
  </PropertyBar>
);

const ToolboxPanel = () => (
  <Toolbox>
    <Tool label="Pick" on>
      <Glyph>
        <path d="M5 1v12l3 -3l2 5l2 -1l-2 -5h4z" fill="#333" stroke="none" />
      </Glyph>
    </Tool>
    <Tool label="Shape">
      <Glyph>
        <path d="M6 0C3 5 3 10 7 15" />
        <rect x="2.500" y="4.500" width="3" height="3" fill="#fff" />
        <path d="M9 8l7 3l-3 1l-1 3z" fill="#333" stroke="none" />
      </Glyph>
    </Tool>
    <ToolboxRule />
    <Tool label="Crop">
      <Glyph>
        <path d="M0 8l7 -8v7l-4 2v7M0.500 8v8M3.500 8v8M6.500 8v8" />
        <path d="M1 8l6 -6v6z" fill="#333" stroke="none" />
        <circle cx="12" cy="3.500" r="3.500" fill="#e01b24" stroke="none" />
        <path d="M10 3.500h4" stroke="#fff" strokeWidth="1.500" />
      </Glyph>
    </Tool>
    <Tool label="Zoom">
      <Glyph>
        <circle cx="6.500" cy="6.500" r="6" />
        <path d="M11 11l5 5" strokeWidth="2" />
      </Glyph>
    </Tool>
    <ToolboxRule />
    <Tool label="Freehand">
      <Glyph>
        <path d="M2 3C3 10 7 12.500 13 12.500" />
        <path d="M1.500 4v9h10" strokeDasharray="1 1" />
        <rect x="0.500" y="0.500" width="3" height="3" fill="#fff" />
        <rect x="12.500" y="11.500" width="3" height="3" fill="#fff" />
      </Glyph>
    </Tool>
    <Tool label="Artistic media" flyout={false}>
      <Glyph>
        <path d="M1 5C1 0 7 -1 7 4C7 7 5 10 6.500 13C8 16 14 16 14.500 11C15 7 11 6 10 8.500" strokeWidth="1.800" />
      </Glyph>
    </Tool>
    <Tool label="Rectangle">
      <Glyph>
        <rect x="0.500" y="0.500" width="15" height="15" />
      </Glyph>
    </Tool>
    <Tool label="Ellipse">
      <Glyph>
        <circle cx="8" cy="8" r="7.500" />
      </Glyph>
    </Tool>
    <Tool label="Polygon">
      <Glyph>
        <path d="M4 0.500h8l3.500 7.500l-3.500 7.500H4L0.500 8z" />
      </Glyph>
    </Tool>
    <ToolboxRule />
    <Tool label="Text">
      <Glyph strokeWidth="2">
        <path d="M1 16L7.500 1h1L15 16M4 10.500h8" />
      </Glyph>
    </Tool>
    <ToolboxRule />
    <Tool label="Dimension">
      <Glyph>
        <path d="M2 14L14 2M0.500 12l4 4M11.500 0.500l4 4M1 15v-3M15 1v3M1 15h3M15 1h-3" stroke="#555" />
      </Glyph>
    </Tool>
    <Tool label="Connector">
      <Glyph>
        <path d="M3 4l10 7" />
        <rect x="0.500" y="0.500" width="4" height="4" fill="#c8743a" stroke="#6b3110" />
        <rect x="11.500" y="11.500" width="4" height="4" fill="#c8743a" stroke="#6b3110" />
      </Glyph>
    </Tool>
    <ToolboxRule />
    <Tool label="Drop shadow">
      <Glyph>
        <rect x="0.500" y="0.500" width="12" height="12" />
        <path d="M15 4v11H4" strokeWidth="2" />
      </Glyph>
    </Tool>
    <Tool label="Transparency" flyout={false}>
      <Glyph shapeRendering="crispEdges">
        <rect x="0.500" y="0.500" width="15" height="15" fill="#fff" />
        {[0, 1, 2, 3, 4].map((r) =>
          [0, 1, 2, 3, 4].map((c) =>
            (r + c) % 2 === 0 ? (
              <rect key={`${r}${c}`} x={1 + c * 3} y={1 + r * 3} width="3" height="3" fill="#333" stroke="none" />
            ) : null
          )
        )}
      </Glyph>
    </Tool>
    <ToolboxRule />
    <Tool label="Eyedropper">
      <Glyph>
        <path d="M10 4L1 13v2.500h2L12 6" />
        <path d="M1 15.500l5 -5" stroke="#c8743a" strokeWidth="2" />
        <path d="M8 4l4 -4l4 1v3l-4 4z" fill="#333" stroke="none" />
      </Glyph>
    </Tool>
    <Tool label="Interactive fill">
      <Glyph>
        <path d="M1 8L8 1l6 6l-6.500 7z" fill="#fff" strokeWidth="1.500" />
        <path d="M7 1l8 7" strokeWidth="3" />
        <path d="M4 8.500h7l-3.500 3z" fill="#e01b3c" stroke="none" />
        <path d="M14 9l2 3v4h-3v-4z" fill="#e01b3c" stroke="none" />
      </Glyph>
    </Tool>
    <Tool label="Smart fill" flyout={false}>
      <Glyph>
        <path d="M3.500 5L8 0.500L12 5L8 9.500z" fill="#fff" strokeWidth="1.300" />
        <path d="M8 0l5 5" strokeWidth="2" />
        <path d="M5 6h6l-3 3z" fill="#c8743a" stroke="none" />
        <path d="M13.500 5v5" stroke="#c8743a" />
        <rect x="0.500" y="12.500" width="15" height="3" fill="#fff" />
        <rect x="8.500" y="12.500" width="7" height="3" fill="#c8661a" stroke="#6b3110" />
      </Glyph>
    </Tool>
    <ToolboxRule />
    <ToolboxAdd aria-label="Customize toolbox">
      <PlusCircle />
    </ToolboxAdd>
  </Toolbox>
);

const DockGlyph = ({ d, dash }) => (
  <Glyph stroke="#b9b9b9" shapeRendering="crispEdges">
    {dash && <path d={dash} strokeDasharray="1 1" />}
    <path d={d} />
  </Glyph>
);

const AlignDocker = () => (
  <Docker>
    <AlignSection>
      <AlignColumn>
        Align
        <IconGrid $cols="34px 34px 16px">
          <DockGlyph dash="M0.5 0v16" d="M2.500 2.500h13v4h-13zM2.500 9.500h9v4h-9z" />
          <DockGlyph dash="M7.5 0v16" d="M5 2.500H0.500v4H5M10 2.500h5.500v4H10M5 9.500H3.500v4H5M10 9.500h2.500v4H10" />
          <DockGlyph dash="M15.5 0v16" d="M0.500 2.500h13v4h-13zM4.500 9.500h9v4h-9z" />
          <DockGlyph dash="M0 0.500h16" d="M3.500 2.500h3v13h-3zM9.500 2.500h3v8h-3z" />
          <DockGlyph dash="M0 7.500h16" d="M2.500 5V0.500h4V5M2.500 10v5.500h4V10M9.500 5.500h4v5h-4z" />
          <DockGlyph dash="M0 15.500h16" d="M3.500 0.500h3v13h-3zM9.500 5.500h3v8h-3z" />
        </IconGrid>
      </AlignColumn>
      <AlignColumn $ruled>
        Distribute
        <IconGrid $cols="34px 34px 41px 16px">
          <DockGlyph dash="M0.5 2v8M9.500 2v4M5.500 8v6" d="M0.500 1.500h9M1.500 10.500h4v4h-4zM11.500 3.500h4v4h-4z" />
          <DockGlyph dash="M2.500 2v8M13.500 2v6" d="M2.500 1.500h11M0.500 3.500h4v4h-4zM11.500 10.500h4v4h-4z" />
          <DockGlyph dash="M5.5 2v8M15.500 2v12" d="M5.500 1.500h10M0.500 10.500h4v4h-4zM10.500 4.500h4v4h-4z" />
          <DockGlyph dash="M5.500 0v10M10.500 0v14" d="M0 1.500h5M11 1.500h5M0.500 10.500h4v4h-4zM11.500 4.500h4v4h-4z" />
          <DockGlyph dash="M6 1.500h8M1 9.500h13" d="M14.500 1v9M0.500 11.500h4v4h-4zM7.500 3.500h4v4h-4z" />
          <DockGlyph dash="M6 2.500h8M2 12.500h12" d="M14.500 2v11M0.500 11.500h4v4h-4zM5.500 0.500h4v4h-4z" />
          <DockGlyph dash="M0 6.500h14M6 15.500h10" d="M14.500 6v10M0.500 0.500h4v4h-4zM7.500 10.500h4v4h-4z" />
          <DockGlyph dash="M0 5.500h16M0 10.500h16" d="M14.500 0v5M14.500 11v5M0.500 11.500h4v4h-4zM7.500 0.500h4v4h-4z" />
        </IconGrid>
      </AlignColumn>
    </AlignSection>
    <DockerText>
      <span>Text</span>
      <Glyph stroke="#b0b0b0" overflow="visible">
        <path d="M0 8.500h16" />
        <text x="3" y="7" fontSize="8" fill="#a0a0a0" stroke="none">Aa</text>
        <text x="3" y="16" fontSize="8" fill="#a0a0a0" stroke="none">Bb</text>
      </Glyph>
      <Glyph stroke="#b0b0b0" overflow="visible">
        <path d="M0 15.500h16" />
        <text x="3" y="6" fontSize="8" fill="#a0a0a0" stroke="none">Aa</text>
        <text x="3" y="14" fontSize="8" fill="#a0a0a0" stroke="none">Bb</text>
      </Glyph>
      <Glyph stroke="#b0b0b0" overflow="visible">
        <path d="M0 1h16M0 15h16M1 0v16M15 0v16" strokeWidth="2" strokeDasharray="2 5" />
        <text x="4" y="13" fontSize="12" fontWeight="700" fill="#b0b0b0" stroke="none">A</text>
      </Glyph>
      <EdgeCell>
        <Glyph stroke="#b0b0b0">
          <path d="M0 7h16M8 0v16" strokeWidth="1.500" />
          <path d="M8 7h7v4h-2v2h-3v2h-2z" fill="#bbb" stroke="none" />
        </Glyph>
      </EdgeCell>
    </DockerText>
    <AlignTo>
      <Collapse>
        <Caret dir="up" size={8} />
      </Collapse>
      <AlignHeading $top={6}>Align objects to:</AlignHeading>
      <IconLine>
        <DockGlyph d="M0.500 4.500h11v11h-11zM3.500 0.500h12v11M6.500 3.500h6v6M3.500 3.500v9h9M3.500 3.500h9v9" />
        <DockGlyph d="M0.500 0.500h15v15h-15zM7 4.500h2M6 3.500h4M7 11.500h2M3.500 7v2M12.500 7v2M7 13.500h2M8 2v1" />
        <DockGlyph d="M0.500 0.500h15v15h-15zM3 3l3 3M13 3l-3 3M3 13l3 -3M13 13l-3 -3M8 2v2M8 12v2M2 8h2M12 8h2" />
        <DockGlyph d="M0.500 0.500h15v15h-15zM5.500 0v16M10.500 0v16M0 5.500h16M0 10.500h16" />
        <DockGlyph d="M0.500 0.500h15v15h-15zM9 4.500h5M11.500 2v5" />
      </IconLine>
      <PointRow>
        <AxisLabels>
          <div>X:</div>
          <div>Y:</div>
        </AxisLabels>
        <PairField off width={156} values={['30.0 cm', '15.0 cm']} labels={['X', 'Y']} />
        <PointIcon>
          <Glyph size={14} stroke="#b9b9b9">
            <circle cx="7" cy="9" r="6" />
            <circle cx="7" cy="9" r="1.500" fill="#b9b9b9" />
            <path d="M14 0v4M12 2h4" />
          </Glyph>
        </PointIcon>
      </PointRow>
      <AlignHeading $top={6}>Distribute objects to:</AlignHeading>
      <IconLine>
        <DockGlyph dash="M0.500 0.500h15v15h-15z" d="M0 7.500h16M2 6v3M14 6v3" />
        <DockGlyph d="M0.500 0.500h15v15h-15zM0 7.500h16M3 6v3M13 6v3" />
      </IconLine>
    </AlignTo>
  </Docker>
);

const ColorPalette = () => (
  <Palette>
    <PaletteTop>
      <Caret dir="right" size={8} />
      <Glyph size={12} stroke="#b5b5b5">
        <path d="M1 15l9 -9M8 3l5 5M11 5l4 -4" strokeWidth="2.500" />
      </Glyph>
      <Chevron color="#c4c4c4" />
    </PaletteTop>
    <SwatchList>
      <Swatch $color="#fff" aria-label="No color">
        <svg width="16" height="16" viewBox="0 0 16 16" aria-hidden="true">
          <path d="M0 0l16 16M16 0L0 16" stroke="#222" />
        </svg>
      </Swatch>
      {swatches.map((c) => (
        <Swatch key={c} $color={c} aria-label={c} />
      ))}
    </SwatchList>
    <PaletteEnd aria-label="Scroll palette">
      <Chevron dir="down" color="#b0b0b0" />
    </PaletteEnd>
  </Palette>
);

const AddPageIcon = () => (
  <svg width="10" height="11" viewBox="0 0 10 11" fill="none" stroke="#444" aria-hidden="true">
    <path d="M3 0.500h5.500v10H0.500V3zM2.500 6.500h4M4.500 4.500v4" />
  </svg>
);

const PageStrip = () => (
  <PageBar>
    <PageNav>
      <AddPageIcon />
      <Glyph size={10} stroke="#b0b0b0">
        <path d="M1 0v16" strokeWidth="2" />
        <path d="M16 0v16L4 8z" fill="#b0b0b0" stroke="none" />
      </Glyph>
      <Caret dir="left" size={9} color="#b0b0b0" />
      <span>1&nbsp; of &nbsp;1</span>
      <Caret dir="right" size={9} color="#b0b0b0" />
      <Glyph size={10} stroke="#b0b0b0">
        <path d="M15 0v16" strokeWidth="2" />
        <path d="M0 0v16l12 -8z" fill="#b0b0b0" stroke="none" />
      </Glyph>
      <AddPageIcon />
    </PageNav>
    <PageTab>
      <svg width="6" height="14" viewBox="0 0 6 14" aria-hidden="true">
        <path d="M0 0v14h5L0.500 0z" fill="#f3f3f3" />
        <path d="M0 0.500h1l4 13.500" fill="none" stroke="#8a8a8a" />
      </svg>
      <PageTabText>Page 1</PageTabText>
      <svg width="6" height="14" viewBox="0 0 6 14" aria-hidden="true">
        <path d="M6 0v14H1L4.500 0z" fill="#f3f3f3" />
        <path d="M6 0.500H4.500L0.500 14" fill="none" stroke="#8a8a8a" />
      </svg>
    </PageTab>
    <PageFill />
    <BarScrollButton aria-label="Scroll left">
      <Chevron dir="left" />
    </BarScrollButton>
    <HTrack />
    <BarScrollButton aria-label="Scroll right">
      <Chevron dir="right" />
    </BarScrollButton>
    <BarScrollButton aria-label="Navigator">
      <Glyph size={12}>
        <circle cx="7" cy="7" r="6" />
        <path d="M4 7h6M7 4v6M11 11l5 5" strokeWidth="1.500" />
      </Glyph>
    </BarScrollButton>
  </PageBar>
);

const CollateIcon = () => (
  <svg width="98" height="30" viewBox="0 0 98 30" aria-hidden="true">
    {[1, 2, 3].map((n, i) => (
      <g key={n} transform={`translate(${i * 34} 0)`} fontSize="10" fill="#222">
        <rect x="12.500" y="0.500" width="16" height="22" fill="#fff" stroke="#555566" />
        <path d="M29 1v22H13" fill="none" stroke="#3c3c50" strokeWidth="1" />
        <text x="20" y="18" stroke="none">{n}</text>
        <rect x="0.500" y="6.500" width="16" height="22" fill="#fff" stroke="#555566" />
        <path d="M17 7v22H1" fill="none" stroke="#3c3c50" strokeWidth="1" />
        <text x="8" y="25" stroke="none">{n}</text>
      </g>
    ))}
  </svg>
);

const PrintDialog = () => (
  <Overlay>
    <Dialog role="dialog" aria-label="Print">
      <DialogTitle>
        Print
        <CloseButton aria-label="Close">
          <svg width="12" height="12" viewBox="0 0 12 12" aria-hidden="true">
            <path d="M1 1l10 10M11 1L1 11" stroke="#000" strokeWidth="2" />
          </svg>
        </CloseButton>
      </DialogTitle>
      <DialogBody>
        <TabList role="tablist">
          <Tab role="tab" $active $width={56}>General</Tab>
          <Tab role="tab" $width={55}>Color</Tab>
          <Tab role="tab" $width={71}>Composite</Tab>
          <Tab role="tab" $width={54}>Layout</Tab>
          <Tab role="tab" $width={60}>Prepress</Tab>
          <Tab role="tab" $width={87} $icon>
            <Glyph>
              <path d="M9 0.500H0.500v15h10V9M2 4.500h5M2 8.500h6M2 12.500h6" />
              <path d="M8 4l3 3l5 -7" stroke="#2b9a4b" strokeWidth="1.500" />
            </Glyph>
            No Issues
          </Tab>
        </TabList>
        <Panel>
          <Group $pad="6px 0 6px 11px" $indent={-5}>
            <legend>Destination</legend>
            <DestinationGrid>
              <label htmlFor="printer">Printer:</label>
              <Select id="printer" value="Epilog Engraver WinX64" focus />
              <PushButton>
                <u>P</u>references...
              </PushButton>

              <label htmlFor="page">Page:</label>
              <Select id="page" value="Use printer default (Portrait)" inset />
              <Choice $off>
                <Check type="checkbox" disabled />
                <span>
                  Us<u>e</u> PPD
                </span>
              </Choice>

              <span>Status:</span>
              <span>Ready</span>
              <span />

              <span>Location:</span>
              <span>USB001</span>
              <span />

              <span>Comment:</span>
              <span />
              <FileChoice>
                <Choice>
                  <Check type="checkbox" />
                  <span>
                    Print to fi<u>l</u>e
                  </span>
                </Choice>
                <Caret dir="right" size={12} color="#b0b0b0" />
              </FileChoice>
            </DestinationGrid>
          </Group>

          <Halves>
            <Group $pad="2px 0 12px 11px" $indent={-5}>
              <legend>Print range</legend>
              <RangeRow $cols="133px 1fr">
                <Choice>
                  <Radio type="radio" name="range" defaultChecked />
                  <span>
                    Cu<u>r</u>rent document
                  </span>
                </Choice>
                <Choice>
                  <Radio type="radio" name="range" />
                  <span>
                    <u>D</u>ocuments
                  </span>
                </Choice>
              </RangeRow>
              <RangeRow $cols="133px 1fr">
                <Choice>
                  <Radio type="radio" name="range" />
                  <span>
                    C<u>u</u>rrent page
                  </span>
                </Choice>
                <Choice $off>
                  <Radio type="radio" name="range" disabled />
                  <span>
                    <u>S</u>election
                  </span>
                </Choice>
              </RangeRow>
              <RangeRow $cols="82px 165px">
                <Choice $off>
                  <Radio type="radio" name="range" disabled />
                  <span>
                    Pa<u>g</u>es:
                  </span>
                </Choice>
                <TextBox defaultValue="1" disabled aria-label="Page list" />
              </RangeRow>
              <RangeRow $cols="82px 165px" $height={30}>
                <span />
                <Select value="Even & Odd" disabled label="Even or odd pages" />
              </RangeRow>
            </Group>

            <div>
              <Group $pad="2px 0 13px 12px" $indent={-6}>
                <legend>Copies</legend>
                <RangeRow $cols="171px 70px" $height={28}>
                  <label htmlFor="copies">Number of copies:</label>
                  <Spinner id="copies" value="1" width={70} />
                </RangeRow>
                <RangeRow $cols="171px 1fr" $height={56}>
                  <CollateIcon />
                  <CollateCell>
                    <Choice $off>
                      <Check type="checkbox" disabled />
                      <span>
                        C<u>o</u>llate
                      </span>
                    </Choice>
                  </CollateCell>
                </RangeRow>
              </Group>
              <BitmapRow>
                <Choice>
                  <Check type="checkbox" />
                  <span>
                    Print as <u>b</u>itmap:
                  </span>
                </Choice>
                <Spinner value="300" width={70} disabled label="Bitmap resolution" />
                <span>dpi</span>
              </BitmapRow>
            </div>
          </Halves>

          <StyleRow>
            <label htmlFor="style">Print style:</label>
            <Select id="style" value="CorelDRAW Defaults" />
            <PushButton>
              Sa<u>v</u>e As...
            </PushButton>
          </StyleRow>
        </Panel>
        <DialogFooter>
          <PushButton $width={167}>
            Print Previe<u>w</u>
          </PushButton>
          <PreviewArrow aria-label="Preview options">
            <svg width="17" height="16" viewBox="0 0 17 16" aria-hidden="true">
              <path d="M0 0l10 8l-10 8z" fill="#222" />
              <path d="M4 1l8 7l-8 7M7 1l8 7l-8 7" fill="none" stroke="#222" />
            </svg>
          </PreviewArrow>
          <FooterActions>
            <PushButton $width={87}>Print</PushButton>
            <PushButton $width={87}>Cancel</PushButton>
            <PushButton $width={87}>Apply</PushButton>
            <PushButton $width={87}>Help</PushButton>
          </FooterActions>
        </DialogFooter>
      </DialogBody>
    </Dialog>
  </Overlay>
);

const App = () => {
  return (
    <Window>
      <GlobalStyle />
      <TitleBar>
        <Glyph>
          <circle cx="8" cy="8" r="7.500" fill="#b9b9b9" stroke="#a8a8a8" />
          <path d="M5 2l8 9l-2 2l-6 -7zM4 5l5 6" fill="#fff" stroke="#e6e6e6" />
        </Glyph>
        <TitleText>CorelDRAW 2018 (64-Bit) - Untitled-2*</TitleText>
        <WindowButtons>
          <button aria-label="Account">
            <Glyph stroke="#a8a8a8">
              <path d="M11 1.500H1.500v13h13V6M4 12h8M8 4a2 2 0 0 0 -1 4l-1 4h4l-1 -4a2 2 0 0 0 -1 -4z" />
              <path d="M13 0v3M15 1a2 2 0 1 1 -4 0" />
            </Glyph>
          </button>
          <button aria-label="Minimize">
            <Glyph>
              <path d="M3 12.500h11" stroke="#8c8c8c" strokeWidth="3" />
            </Glyph>
          </button>
          <button aria-label="Restore">
            <Glyph stroke="#8c8c8c">
              <path d="M5 9.500H1.500v-8h8V5" strokeWidth="1.300" />
              <path d="M5.500 5.500h8v8h-8z" strokeWidth="1.300" />
              <path d="M5 6h9" strokeWidth="2" />
            </Glyph>
          </button>
          <button aria-label="Close window">
            <Glyph stroke="#8c8c8c">
              <path d="M2 2l12 12M14 2L2 14" strokeWidth="1.800" />
            </Glyph>
          </button>
        </WindowButtons>
      </TitleBar>
      <MenuBar>
        {menus.map(([a, b, c]) => (
          <button key={a + b + c}>
            {a}
            <u>{b}</u>
            {c}
          </button>
        ))}
      </MenuBar>
      <StandardBar />
      <PropertiesBar />
      <Work>
        <ToolboxPanel />
        <Documents>
          <DocTabs>
            <DocTab $width={132}>
              <Glyph size={14}>
                <path d="M8 0L0 8h2v8h5v-5h2v5h5V8h2l-3 -3V1h-2v2z" fill="#333" stroke="none" />
              </Glyph>
              Welcome Screen
            </DocTab>
            <DocTab $width={83}>Untitled-1*</DocTab>
            <DocTab $width={102}>Untitled-1.cdr*</DocTab>
            <DocTab $width={68}>alex.cdr*</DocTab>
            <DocTab $width={83} $active>Untitled-2*</DocTab>
            <DocTab $width={19} aria-label="New document">
              <Glyph size={12} stroke="#aaa">
                <path d="M0 8h16M8 0v16" strokeWidth="2.500" />
              </Glyph>
            </DocTab>
          </DocTabs>
          <RulerRow>
            <RulerCorner>
              <Glyph size={12} stroke="#888">
                <path d="M0 5h16M5 0v16" strokeDasharray="2 1" />
                <path d="M5 5l10 10M5 10V5h5" strokeWidth="1.500" />
              </Glyph>
            </RulerCorner>
            <TopRuler />
          </RulerRow>
          <DocBody>
            <SideRuler />
            <Center>
              <CanvasRow>
                <Drawing />
                <VScroll>
                  <ScrollButton aria-label="Scroll up">
                    <Chevron />
                  </ScrollButton>
                  <VTrack />
                  <ScrollButton aria-label="Scroll down">
                    <Chevron dir="down" />
                  </ScrollButton>
                </VScroll>
              </CanvasRow>
              <PageStrip />
            </Center>
          </DocBody>
        </Documents>
        <Splitter />
        <DockerArea>
          <DockerTitle>
            <span>Align and Distribute</span>
            <svg width="9" height="8" viewBox="0 0 9 8" aria-hidden="true">
              <path d="M0 1l4 3l-4 3zM4 1l4 3l-4 3z" fill="#aaa" />
            </svg>
            <svg width="8" height="8" viewBox="0 0 8 8" aria-hidden="true">
              <path d="M1 1l6 6M7 1L1 7" stroke="#aaa" strokeWidth="2" />
            </svg>
          </DockerTitle>
          <DockerMain>
            <AlignDocker />
            <DockerStrip>
              <DockerTab>
                <Glyph size={14}>
                  <path d="M0.500 0v16" stroke="#3aa7c7" />
                  <path d="M3.500 1.500h12v5h-12zM3.500 8.500h7v5h-7z" strokeWidth="1.500" />
                </Glyph>
                Align and Distribute
              </DockerTab>
              <PlusCircle color="#8f8f8f" />
            </DockerStrip>
          </DockerMain>
        </DockerArea>
        <ColorPalette />
      </Work>
      <PrintDialog />
    </Window>
  );
};

export default App;
